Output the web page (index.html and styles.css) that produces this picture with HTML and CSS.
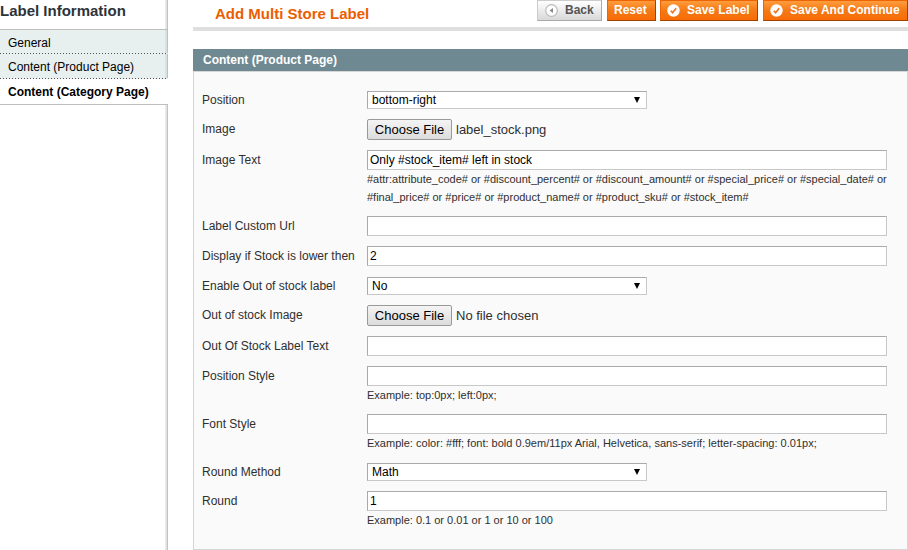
FILE: index.html
```html
<!DOCTYPE html>
<html lang="en">
<head>
<meta charset="utf-8">
<title>Add Multi Store Label</title>
<link rel="stylesheet" href="styles.css">
</head>
<body>
<div class="page">
  <aside class="sidebar">
    <h3>Label Information</h3>
    <ul class="tabs">
      <li>General</li>
      <li>Content (Product Page)</li>
      <li class="active">Content (Category Page)</li>
    </ul>
  </aside>
  <main class="main">
    <header class="head">
      <h1>Add Multi Store Label</h1>
      <div class="buttons">
        <button class="btn back"><svg width="13" height="13" viewBox="0 0 13 13"><circle cx="6.5" cy="6.5" r="5.8" fill="#fff" stroke="#bbb" stroke-width="1.2"/><path d="M8 4v5L4.6 6.5z" fill="#888"/></svg><span>Back</span></button>
        <button class="btn reset"><span>Reset</span></button>
        <button class="btn save"><svg width="13" height="13" viewBox="0 0 13 13"><circle cx="6.5" cy="6.5" r="6.2" fill="#fff"/><path d="M3.8 6.7l1.8 2 3.6-4.5" fill="none" stroke="#ee7420" stroke-width="1.7"/></svg><span>Save Label</span></button>
        <button class="btn continue"><svg width="13" height="13" viewBox="0 0 13 13"><circle cx="6.5" cy="6.5" r="6.2" fill="#fff"/><path d="M3.8 6.7l1.8 2 3.6-4.5" fill="none" stroke="#ee7420" stroke-width="1.7"/></svg><span>Save And Continue</span></button>
      </div>
    </header>
    <h4 class="panel-head">Content (Product Page)</h4>
    <form class="panel">
      <div class="row"><label>Position</label><div><div class="select"><span>bottom-right</span><i class="arrow"></i></div></div></div>
      <div class="row"><label>Image</label><div class="file"><button type="button">Choose File</button><span>label_stock.png</span></div></div>
      <div class="row"><label>Image Text</label><div><input type="text" value="Only #stock_item# left in stock"><p>#attr:attribute_code# or #discount_percent# or #discount_amount# or #special_price# or #special_date# or<br>#final_price# or #price# or #product_name# or #product_sku# or #stock_item#</p></div></div>
      <div class="row"><label>Label Custom Url</label><div><input type="text"></div></div>
      <div class="row"><label>Display if Stock is lower then</label><div><input type="text" value="2"></div></div>
      <div class="row"><label>Enable Out of stock label</label><div><div class="select"><span>No</span><i class="arrow"></i></div></div></div>
      <div class="row"><label>Out of stock Image</label><div class="file"><button type="button">Choose File</button><span>No file chosen</span></div></div>
      <div class="row"><label>Out Of Stock Label Text</label><div><input type="text"></div></div>
      <div class="row"><label>Position Style</label><div><input type="text"><p>Example: top:0px; left:0px;</p></div></div>
      <div class="row"><label>Font Style</label><div><input type="text"><p class="wide">Example: color: #fff; font: bold 0.9em/11px Arial, Helvetica, sans-serif; letter-spacing: 0.01px;</p></div></div>
      <div class="row"><label>Round Method</label><div><div class="select"><span>Math</span><i class="arrow"></i></div></div></div>
      <div class="row"><label>Round</label><div><input type="text" value="1"><p>Example: 0.1 or 0.01 or 1 or 10 or 100</p></div></div>
    </form>
  </main>
</div>
</body>
</html>
```
FILE: styles.css
```css
* { box-sizing: border-box; }
body {
  margin: 0;
  background: #fff;
  color: #2f2f2f;
  font: 12px/20px "Liberation Sans", Arial, sans-serif;
}
.page { display: flex; width: 908px; height: 550px; overflow: hidden; }

.sidebar {
  width: 168px;
  margin-right: 25px;
  background: linear-gradient(to right, #fff 165px, #ebebeb 165px, #ebebeb 166px, #e0e0e0 166px, #e0e0e0 167px, #c4c4c4 167px);
}
.sidebar h3 { margin: 0; height: 29px; font-size: 15px; line-height: 22px; color: #2d3338; }
.tabs { list-style: none; margin: 0; padding: 0; border-top: 1px solid #bebebe; border-bottom: 1px solid #bebebe; color: #000; }
.tabs li {
  height: 24px;
  padding-left: 8px;
  line-height: 26px;
  background:
    repeating-linear-gradient(to right, #555 0 1px, #e7efef 1px 3px) left bottom / 100% 1px no-repeat,
    linear-gradient(to right, #e7efef 165px, #d9e5e6 165px, #d2dfe1 167px, #b3c7ca 167px);
}
.tabs li:nth-child(2) { height: 25px; }
.tabs .active { height: 25px; font-weight: bold; background: #fff; }

.main { width: 715px; }
.head { display: flex; justify-content: space-between; height: 31px; border-bottom: 4px solid #dfdfdf; }
.head h1 { margin: 0; padding-left: 22px; font-size: 15px; line-height: 28px; color: #eb5e00; }
.buttons { display: flex; }
.btn {
  display: flex;
  align-items: center;
  height: 21px;
  margin: 0 0 0 5px;
  padding: 0 7px;
  border: 1px solid;
  border-color: #ed6502 #a04300 #a04300 #ed6502;
  background: linear-gradient(#ff9c3c, #f47a16 50%, #f86b05);
  color: #fff;
  font: bold 12px/18px "Liberation Sans", Arial, sans-serif;
  white-space: nowrap;
}
.btn span { position: relative; top: -1px; }
.btn svg { margin-right: 7px; flex: none; }
.back { width: 65px; border-color: #ccc #aaa #aaa #ccc; background: linear-gradient(#fff, #d8d8d8); color: #555; }
.reset { width: 49px; padding-left: 6px; }
.save { width: 98px; margin-left: 4px; padding-left: 6px; }
.continue { width: 145px; padding-left: 6px; }

.panel-head { margin: 18px 0 0; height: 22px; padding-left: 10px; background: #6f8992; color: #fff; font-size: 12px; line-height: 22px; }
.panel { height: 479px; padding: 18px 0 0 8px; border: 1px solid #d6d6d6; background: #fafafa; }
.row { display: grid; grid-template-columns: 165px 520px; margin-bottom: 10px; }
.row label { height: 18px; }
.row input {
  display: block;
  width: 520px;
  height: 20px;
  margin: 0;
  padding: 0 2px;
  border: 1px solid;
  border-color: #aaa #c8c8c8 #c8c8c8 #aaa;
  background: #fff;
  color: #000;
  font: 12px "Liberation Sans", Arial, sans-serif;
}
.row p { margin: 0; font-size: 11px; line-height: 18px; white-space: nowrap; }
.row .wide { letter-spacing: 0.01px; }
.select {
  display: flex;
  justify-content: space-between;
  align-items: center;
  width: 280px;
  height: 18px;
  margin-top: 1px;
  padding: 0 6px 0 4px;
  border: 1px solid;
  border-color: #aaa #c8c8c8 #c8c8c8 #aaa;
  background: #fff;
  color: #000;
  line-height: 16px;
}
.arrow { border: solid transparent; border-width: 6px 3px 0; border-top-color: #000; }
.file { display: flex; align-items: center; height: 21px; font-size: 13px; }
.file button {
  width: 85px;
  height: 21px;
  margin: 0 4px 0 0;
  padding: 0;
  border: 1px solid #999;
  border-radius: 2px;
  background: linear-gradient(#f4f4f4, #dcdcdc);
  color: #000;
  font: 13px "Liberation Sans", Arial, sans-serif;
}
```
